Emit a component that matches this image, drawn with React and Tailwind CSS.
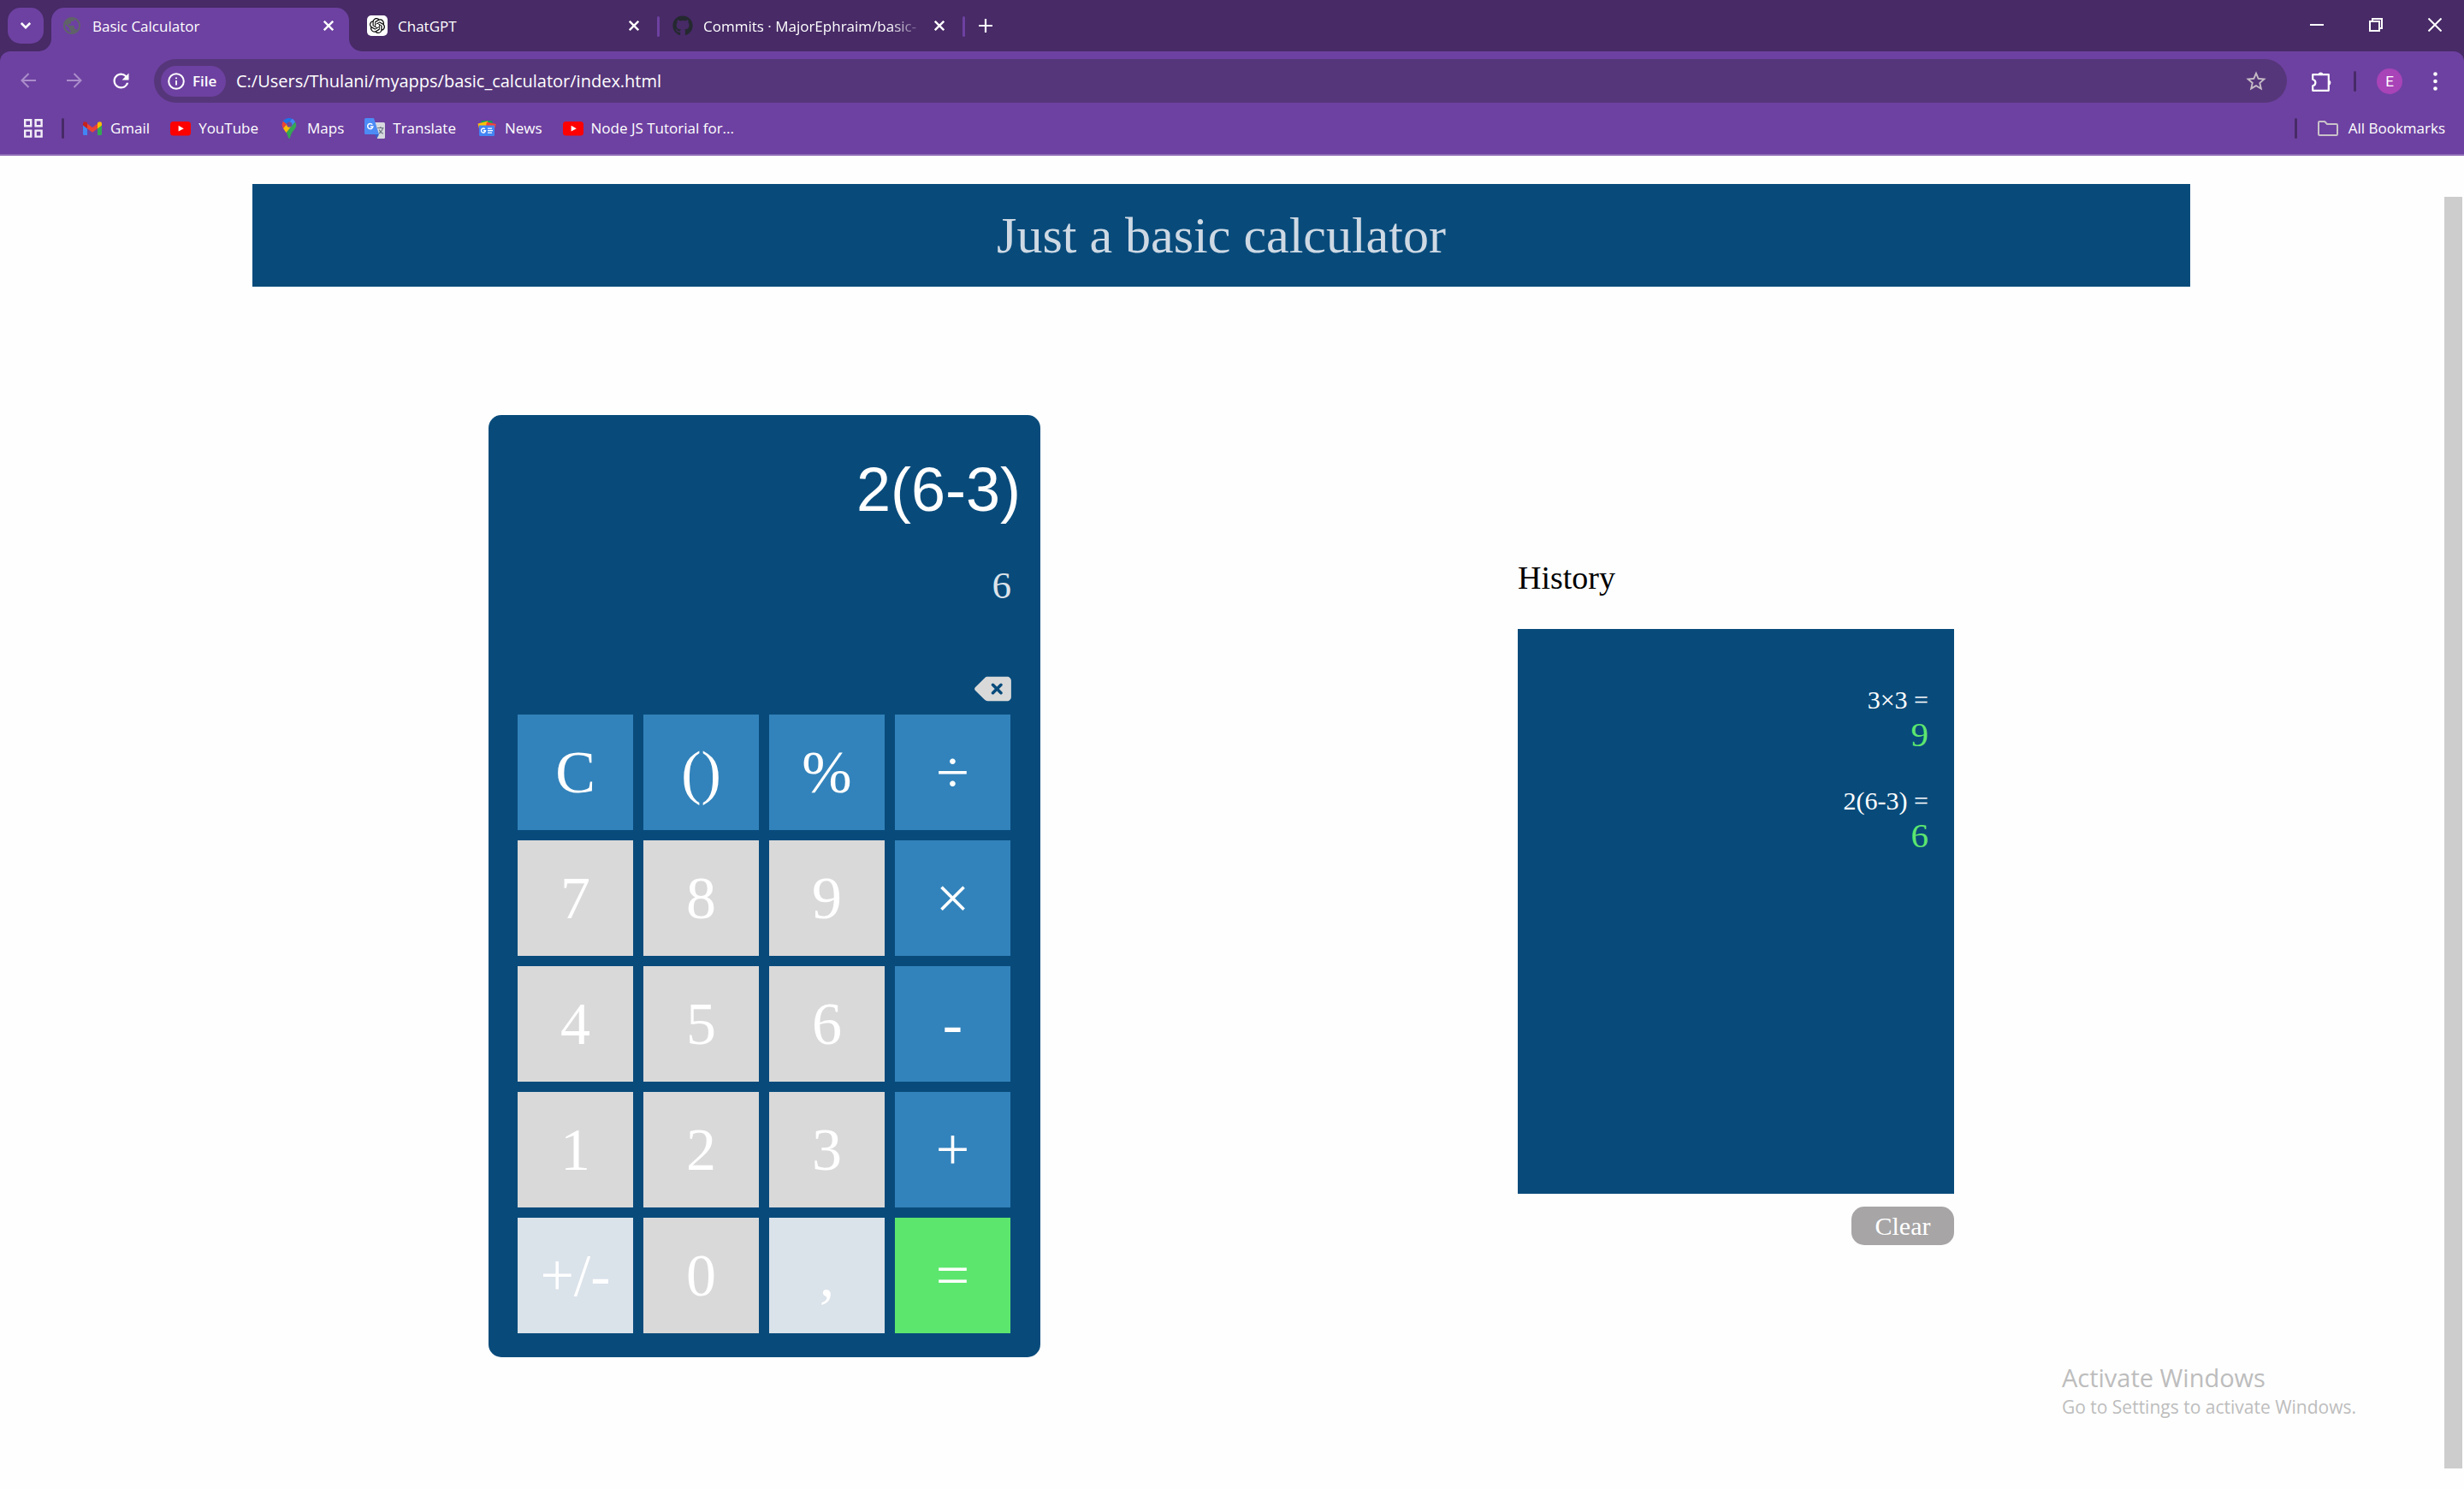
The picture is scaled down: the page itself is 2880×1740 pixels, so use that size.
import React from "react";
import { MdPublic, MdRefresh, MdStarBorder } from "react-icons/md";
import { SiOpenai } from "react-icons/si";
import { FaGithub, FaDeleteLeft } from "react-icons/fa6";

const CrossIcon = () => (
  <svg viewBox="0 0 12 12" className="size-3" stroke="#fff" strokeWidth="2.4" fill="none">
    <path d="M0.8 0.8L11.2 11.2M11.2 0.8L0.8 11.2" />
  </svg>
);

const ArrowIcon = ({ flip }) => (
  <svg viewBox="0 0 18 18" className={flip ? "size-[18px] rotate-180" : "size-[18px]"} stroke="#ab8dcb" strokeWidth="2" fill="none">
    <path d="M18 9H1.5M9.5 1L1.5 9L9.5 17" />
  </svg>
);

const InfoIcon = () => (
  <svg viewBox="0 0 20 20" className="size-5" fill="none" stroke="#fff" strokeWidth="2">
    <circle cx="10" cy="10" r="8.8" />
    <path d="M10 9V14.5M10 5.4V7.3" strokeWidth="1.8" />
  </svg>
);

const PuzzleIcon = () => (
  <svg viewBox="0 0 24 24" className="size-6" fill="none" stroke="#fff" strokeWidth="2.2" strokeLinejoin="round">
    <path d="M1.2 4.2H19.8V22.8H1.2V17.4C3 17 4.4 15.6 4.4 13.6S3 10.2 1.2 9.8Z" />
    <path d="M7.4 4A3.2 3.2 0 0 1 13.6 4ZM20 10.4A3.2 3.2 0 0 1 20 16.6Z" fill="#fff" stroke="none" />
  </svg>
);

const FolderIcon = () => (
  <svg viewBox="0 0 24 18" className="h-[18px] w-6" fill="none" stroke="#c9c2c9" strokeWidth="2" strokeLinejoin="round">
    <path d="M1 2.2Q1 1 2.2 1H8.2L11 4H21.8Q23 4 23 5.2V15.8Q23 17 21.8 17H2.2Q1 17 1 15.8Z" />
  </svg>
);

const AppsIcon = () => (
  <svg viewBox="0 0 22 22" className="size-[22px]" fill="none" stroke="#f3eef8" strokeWidth="2.4">
    <path d="M1.2 1.2H8.2V8.2H1.2ZM13.6 1.2H20.6V8.2H13.6ZM1.2 13.6H8.2V20.6H1.2ZM13.6 13.6H20.6V20.6H13.6Z" />
  </svg>
);

const GmailIcon = () => (
  <svg viewBox="0 0 24 24" className="size-6">
    <path d="M1 7V18.5A1.5 1.5 0 0 0 2.5 20H6V11Z" fill="#4285f4" />
    <path d="M23 7V18.5A1.5 1.5 0 0 1 21.5 20H18V11Z" fill="#34a853" />
    <path d="M6 6.5L12 11L18 6.5V12.2L12 16.7L6 12.2Z" fill="#ea4335" />
    <path d="M1 6.5C1 4.2 3.4 3.6 5 4.8L6 5.6V12.2L1 8.5Z" fill="#c5221f" />
    <path d="M23 6.5C23 4.2 20.6 3.6 19 4.8L18 5.6V12.2L23 8.5Z" fill="#fbbc04" />
  </svg>
);

const YouTubeIcon = () => (
  <svg viewBox="0 0 24 24" className="size-6">
    <rect x="0" y="4" width="24" height="16.5" rx="3.5" fill="#f00" />
    <path d="M9.6 8.8L15.8 12.2L9.6 15.6Z" fill="#fff" />
  </svg>
);

const MapsIcon = () => (
  <svg viewBox="0 0 24 24" className="size-6">
    <path d="M12 0C8.8 0 6.3 1.4 4.9 3.7L9 7.4L15.5 0.8C14.4 0.3 13.2 0 12 0Z" fill="#1a73e8" />
    <path d="M4.9 3.7C3.3 6.2 3.3 9.3 5 12L9.4 7.2Z" fill="#ea4335" />
    <path d="M5 12C6 13.8 7.4 15.3 8.6 17.2L14.4 10.3L9.2 7.2Z" fill="#fbbc04" />
    <path d="M15.5 0.8L9.8 7.4L14.4 10.3L19 4.4C18.2 2.7 17 1.5 15.5 0.8Z" fill="#4285f4" />
    <path d="M19 4.4L8.6 17C10.4 19.8 10.9 24 12 24C13.4 24 13.4 19.4 15.6 16.4C17.6 13.6 20.2 11.6 20.2 8C20.2 6.7 19.6 5.5 19 4.4Z" fill="#34a853" />
    <circle cx="12.2" cy="7.6" r="3.1" fill="#6d4a9a" />
  </svg>
);

const TranslateIcon = () => (
  <svg viewBox="0 0 24 24" className="size-6">
    <path d="M9 5H22.5A1.5 1.5 0 0 1 24 6.5V22.5A1.5 1.5 0 0 1 22.5 24H15Z" fill="#d6d9de" />
    <path d="M12 19H17L14.5 24Z" fill="#3a5cc4" />
    <path d="M1.5 0H11L17 19H1.5A1.5 1.5 0 0 1 0 17.5V1.5A1.5 1.5 0 0 1 1.5 0Z" fill="#4c8bf5" />
    <path d="M15.2 11.5H22.5M18.8 10V11.5M21.5 11.5C21 14.5 19 16.5 17 18M17.2 13.5C18 15.5 20 17.5 21.8 18.3" stroke="#6b7480" strokeWidth="1.2" fill="none" />
    <path d="M9.3 7.6A3.1 3.1 0 1 0 9.9 10H6.9" stroke="#fff" strokeWidth="1.5" fill="none" />
  </svg>
);

const NewsIcon = () => (
  <svg viewBox="0 0 24 24" className="size-6">
    <rect x="5.5" y="3" width="13" height="8" rx="1" fill="#0c9d58" />
    <path d="M1.5 6.5L13 3.5L16 14L4 16Z" fill="#ffc107" />
    <path d="M22.8 7L12 4.5L10 14L20 16Z" fill="#f44336" />
    <path d="M3 8.5H21V19.5A1.5 1.5 0 0 1 19.5 21H4.5A1.5 1.5 0 0 1 3 19.5Z" fill="#4285f4" />
    <path d="M9.8 12.8A2.5 2.5 0 1 0 10.5 14.8H8" stroke="#fff" strokeWidth="1.4" fill="none" />
    <path d="M13 12.2H18M13 14.7H19M13 17.2H18" stroke="#fff" strokeWidth="1.3" />
  </svg>
);

const FlareIcon = ({ side }) => (
  <svg viewBox="0 0 15 15" className={side === "left" ? "absolute bottom-0 -left-[15px] size-[15px]" : "absolute bottom-0 -right-[15px] size-[15px]"} fill="#6d41a1">
    <path d={side === "left" ? "M15 0V15H0A15 15 0 0 0 15 0Z" : "M0 0V15H15A15 15 0 0 1 0 0Z"} />
  </svg>
);

const Tab = ({ icon, title, active, fade }) => (
  <div className={active ? "relative flex h-[51px] w-[348px] items-center rounded-t-[15px] bg-[#6d41a1] pb-[9px] pl-3 pr-[18px]" : "flex h-[51px] w-[348px] items-center pb-[9px] pl-3 pr-[18px]"}>
    {active && <FlareIcon side="left" />}
    {active && <FlareIcon side="right" />}
    <span className="flex size-6 shrink-0 items-center justify-center">{icon}</span>
    <span className={fade ? "mr-1 ml-3 flex-1 whitespace-nowrap pt-0.5 text-[17px] leading-6 [mask-image:linear-gradient(to_right,#000_82%,transparent_97%)]" : "mr-1 ml-3 flex-1 whitespace-nowrap pt-0.5 text-[17px] leading-6"}>
      {title}
    </span>
    <button type="button" aria-label={`Close ${title}`}><CrossIcon /></button>
  </div>
);

const TabDivider = () => <span className="mx-[3px] mt-[10px] h-6 w-[3px] rounded-full bg-[#6d41a1]" />;

const bookmarks = [
  ["Gmail", GmailIcon],
  ["YouTube", YouTubeIcon],
  ["Maps", MapsIcon],
  ["Translate", TranslateIcon],
  ["News", NewsIcon],
  ["Node JS Tutorial for...", YouTubeIcon],
];

const Browser = () => (
  <header className="bg-[#472a66] font-['Open_Sans',sans-serif] text-[17px] text-white">
    <div className="flex h-[60px] items-start pl-[9px] pt-[9px]">
      <button type="button" aria-label="Search tabs" className="mr-[9px] flex size-[42px] items-center justify-center rounded-[15px] bg-[#6d41a1]">
        <svg viewBox="0 0 12 8" className="h-2 w-3" fill="none" stroke="#fff" strokeWidth="2.6"><path d="M0.8 1L6 6.2L11.2 1" /></svg>
      </button>
      <div className="flex">
        <Tab active icon={<MdPublic className="size-6 text-[#5f6368]" />} title="Basic Calculator" />
        <span className="w-[9px]" />
        <Tab icon={<span className="flex size-6 items-center justify-center rounded-[5px] bg-white"><SiOpenai className="size-[18px] text-black" /></span>} title="ChatGPT" />
        <TabDivider />
        <Tab fade icon={<FaGithub className="size-6 text-[#24292f]" />} title="Commits · MajorEphraim/basic-" />
        <TabDivider />
      </div>
      <button type="button" aria-label="New tab" className="ml-[13px] flex h-[42px] items-center">
        <svg viewBox="0 0 16 16" className="size-4" stroke="#fff" strokeWidth="2.2"><path d="M8 0V16M0 8H16" /></svg>
      </button>
      <div className="ml-auto flex h-10 items-center gap-[53px] pr-[26px]">
        <button type="button" aria-label="Minimize"><svg viewBox="0 0 16 16" className="size-4" stroke="#fff" strokeWidth="2"><path d="M0 8H16" /></svg></button>
        <button type="button" aria-label="Restore"><svg viewBox="0 0 16 16" className="size-4" fill="none" stroke="#fff" strokeWidth="2"><path d="M1 4H12V15H1ZM4 4V1H15V12H12" /></svg></button>
        <button type="button" aria-label="Close window"><svg viewBox="0 0 16 16" className="size-4" stroke="#fff" strokeWidth="2"><path d="M0.5 0.5L15.5 15.5M15.5 0.5L0.5 15.5" /></svg></button>
      </div>
    </div>
    <div className="rounded-t-xl border-b-2 border-[#8f6bb5] bg-[#6d41a1]">
      <div className="flex h-[60px] items-center pt-[9px]">
        <div className="flex w-[180px] items-center gap-9 pb-px pl-6">
          <button type="button" aria-label="Back"><ArrowIcon /></button>
          <button type="button" aria-label="Forward"><ArrowIcon flip /></button>
          <button type="button" aria-label="Reload" className="-ml-1"><MdRefresh className="size-[27px]" /></button>
        </div>
        <div className="flex h-[51px] flex-1 items-center rounded-full bg-[#56367a] pl-2 pr-[22px]">
          <span className="mr-3 flex h-9 w-[76px] items-center gap-[9px] rounded-full bg-[#6d41a1] pl-2 text-[17px] font-semibold"><InfoIcon />File</span>
          <input aria-label="Address" readOnly defaultValue="C:/Users/Thulani/myapps/basic_calculator/index.html" className="min-w-0 flex-1 bg-transparent text-[20px] leading-7 outline-none" />
          <button type="button" aria-label="Bookmark this page"><MdStarBorder className="size-7 text-[#c6bdc6]" /></button>
        </div>
        <div className="flex items-center pl-[29px] pr-[31px]">
          <button type="button" aria-label="Extensions"><PuzzleIcon /></button>
          <span className="ml-[25px] h-6 w-[3px] rounded-full bg-[#472a66]" />
          <button type="button" aria-label="Profile" className="ml-6 size-[30px] rounded-full bg-[#a843b8] font-[Roboto,sans-serif] text-[17px] leading-[30px]">E</button>
          <button type="button" aria-label="Menu" className="ml-9">
            <svg viewBox="0 0 5 22" className="h-[22px] w-[5px]" fill="#fff"><circle cx="2.5" cy="2.5" r="2.3" /><circle cx="2.5" cy="11" r="2.3" /><circle cx="2.5" cy="19.5" r="2.3" /></svg>
          </button>
        </div>
      </div>
      <nav aria-label="Bookmarks" className="flex h-[60px] items-center pl-7 pr-[22px]">
        <button type="button" aria-label="Apps"><AppsIcon /></button>
        <span className="ml-[22px] mr-[21px] h-6 w-[3px] rounded-full bg-[#472a66]" />
        <div className="flex gap-6">
          {bookmarks.map(([name, Icon]) => (
            <a key={name} href="#" className="flex items-center gap-[9px]"><Icon />{name}</a>
          ))}
        </div>
        <span className="ml-auto mr-6 h-6 w-[3px] rounded-full bg-[#472a66]" />
        <button type="button" className="flex items-center gap-3"><FolderIcon />All Bookmarks</button>
      </nav>
    </div>
  </header>
);

const styles = {
  op: "bg-[#3283bb]",
  num: "bg-[#d9d9d9]",
  alt: "bg-[#dae2ea]",
  eq: "bg-[#5de66e]",
};

const keys = [
  ["C", "op"], ["()", "op"], ["%", "op"], ["÷", "op"],
  ["7", "num"], ["8", "num"], ["9", "num"], ["×", "op"],
  ["4", "num"], ["5", "num"], ["6", "num"], ["-", "op"],
  ["1", "num"], ["2", "num"], ["3", "num"], ["+", "op"],
  ["+/-", "alt"], ["0", "num"], [",", "alt"], ["=", "eq"],
];

const Calculator = () => (
  <section aria-label="Calculator" className="flex flex-col rounded-[15px] bg-[#084b7b] px-[34px] pb-7 pt-[45px] text-white">
    <input aria-label="Expression" readOnly defaultValue="2(6-3)" className="-mr-[11px] h-[84px] w-[588px] self-end bg-transparent text-right font-['Liberation_Sans',Arial,sans-serif] text-[72px] outline-none" />
    <output className="mt-[44px] block text-right text-[45px] leading-[52px] text-[#dce3ea]">6</output>
    <button type="button" aria-label="Delete" className="mt-[76px] self-end"><FaDeleteLeft className="h-[38px] w-[43px] text-[#d9d9d9]" /></button>
    <div className="mt-[11px] grid grid-cols-[repeat(4,135px)] gap-3">
      {keys.map(([label, kind]) => (
        <button key={label} type="button" className={`h-[135px] text-[70px] leading-[80px] ${styles[kind]}`}>{label}</button>
      ))}
    </div>
  </section>
);

const history = [["3×3 =", "9"], ["2(6-3) =", "6"]];

const History = () => (
  <section aria-label="History" className="flex w-[510px] flex-col">
    <h2 className="my-[38px] text-[38px] leading-[43px] text-black">History</h2>
    <ul className="flex h-[660px] flex-col gap-[37px] bg-[#084b7b] px-[30px] pt-[66px] text-right">
      {history.map(([expr, result]) => (
        <li key={expr}>
          <p className="text-[30px] leading-[34px] text-white">{expr}</p>
          <p className="text-[41px] leading-[47px] text-[#5de66e]">{result}</p>
        </li>
      ))}
    </ul>
    <button type="button" className="mt-[15px] h-[45px] w-[120px] self-end rounded-[15px] bg-[#a7a5a6] text-[30px] leading-[34px] text-white">Clear</button>
  </section>
);

export default function App() {
  return (
    <div className="relative flex min-h-screen flex-col bg-[#fefefe]">
      <Browser />
      <div className="flex flex-1">
        <main className="flex-1 pt-[33px] font-['Liberation_Serif','Times_New_Roman',serif]">
          <h1 className="mx-[295px] bg-[#084b7b] py-[25px] text-center text-[60px] leading-[70px] text-[#ced9e4]">Just a basic calculator</h1>
          <div className="mt-[150px] flex items-center justify-between px-[20%]">
            <Calculator />
            <History />
          </div>
        </main>
        <div className="flex w-[25px] flex-col px-0.5 pb-6 pt-12">
          <div className="w-[21px] flex-1 bg-[#cdcdcd]" />
        </div>
      </div>
      <aside className="absolute bottom-[80px] right-[126px] font-['Open_Sans',sans-serif] text-[#bdbdbd]">
        <p className="text-[29px] leading-9">Activate Windows</p>
        <p className="text-[21px] leading-8">Go to Settings to activate Windows.</p>
      </aside>
    </div>
  );
}
